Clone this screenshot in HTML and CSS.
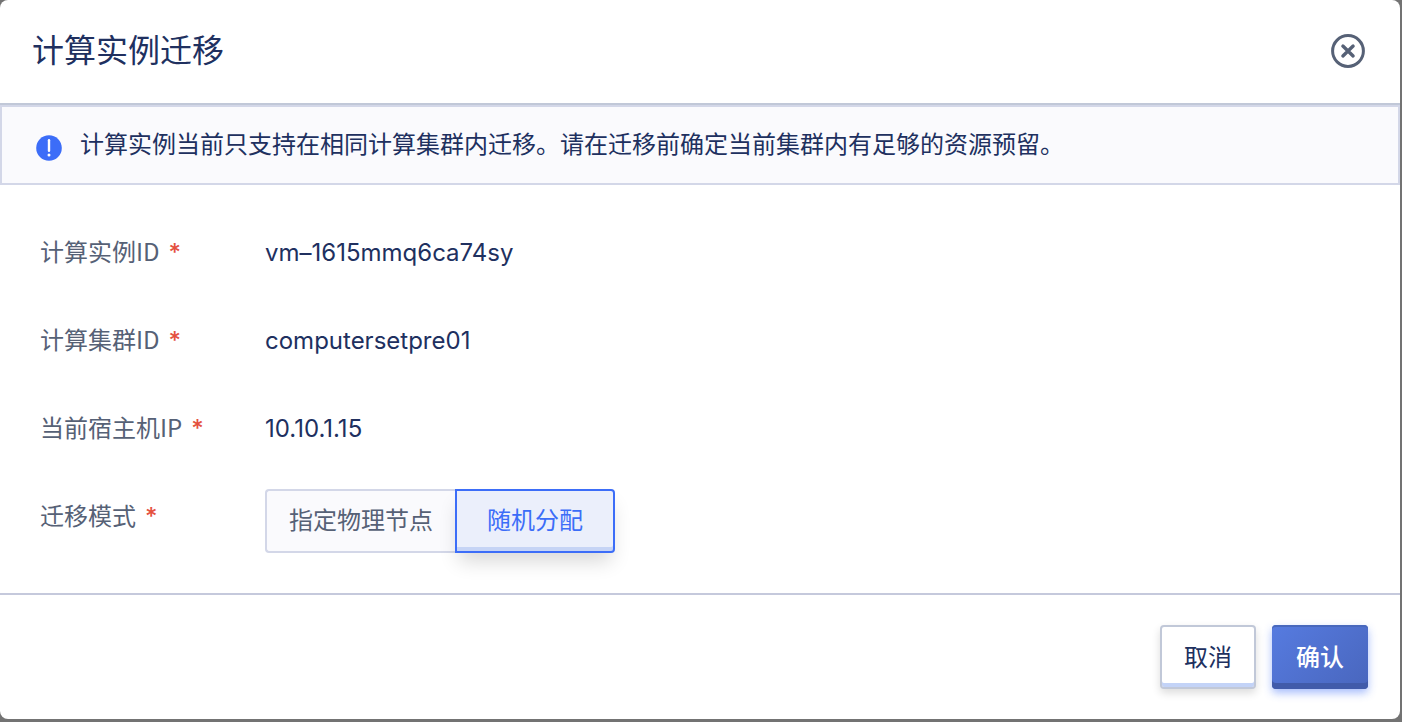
FILE: index.html
```html
<!DOCTYPE html>
<html lang="zh-CN">
<head>
<meta charset="utf-8">
<meta name="viewport" content="width=device-width, initial-scale=1">
<title>计算实例迁移</title>
<link rel="stylesheet" href="styles.css">
</head>
<body class="backdrop">
<form class="modal" role="dialog" aria-labelledby="modal-title">
  <header class="modal-header">
    <h1 class="modal-title" id="modal-title">计算实例迁移</h1>
    <button class="close" type="button" aria-label="关闭">
      <svg class="close-icon" viewBox="0 0 36 36" aria-hidden="true">
        <circle cx="18" cy="18" r="15.4" fill="none" stroke="currentColor" stroke-width="3"/>
        <path d="M12.9 13.1l10.2 9.8M23.1 13.1l-10.2 9.8" fill="none" stroke="currentColor" stroke-width="3.4" stroke-linecap="round"/>
      </svg>
    </button>
  </header>
  <div class="alert" role="note">
    <svg class="alert-icon" viewBox="0 0 26 26" aria-hidden="true">
      <circle cx="13" cy="13" r="12.8" fill="#3c6df8"/>
      <path d="M13 5.3v10.4" stroke="#fff" stroke-width="2.4" stroke-linecap="round"/>
      <circle cx="13" cy="20" r="1.5" fill="#fff"/>
    </svg>
    <p class="alert-text">计算实例当前只支持在相同计算集群内迁移。请在迁移前确定当前集群内有足够的资源预留。</p>
  </div>
  <div class="fields">
    <div class="field">
      <label class="label" for="vm">计算实例ID<span class="star">*</span></label>
      <output class="value" id="vm">vm–1615mmq6ca74sy</output>
    </div>
    <div class="field">
      <label class="label" for="cluster">计算集群ID<span class="star">*</span></label>
      <output class="value" id="cluster">computersetpre01</output>
    </div>
    <div class="field">
      <label class="label" for="host">当前宿主机IP<span class="star">*</span></label>
      <output class="value" id="host">10.10.1.15</output>
    </div>
    <div class="field">
      <span class="label" id="mode-label">迁移模式<span class="star">*</span></span>
      <div class="segments" role="radiogroup" aria-labelledby="mode-label">
        <label class="segment"><input class="segment-input" type="radio" name="mode" value="node">指定物理节点</label>
        <label class="segment segment-wide"><input class="segment-input" type="radio" name="mode" value="random" checked>随机分配</label>
      </div>
    </div>
  </div>
  <footer class="modal-footer">
    <button class="btn btn-cancel" type="button">取消</button>
    <button class="btn btn-confirm" type="submit">确认</button>
  </footer>
</form>
</body>
</html>
```
FILE: styles.css
```css
* { box-sizing: border-box; }

.backdrop {
  margin: 0;
  min-height: 100vh;
  padding: 0 2px 3px 0;
  display: flex;
  background: #737373;
  color: #20305f;
  font-family: Inter, "Noto Sans CJK SC", sans-serif;
  font-size: 24px;
}

.modal {
  flex: 1;
  display: flex;
  flex-direction: column;
  background: #fff;
  border-radius: 8px;
}

.modal-header {
  display: flex;
  align-items: center;
  justify-content: space-between;
  padding: 27px 34px 28px 32px;
  border-bottom: 2px solid #c1c8d8;
}

.modal-title {
  margin: 0;
  font-size: 32px;
  line-height: 48px;
  font-weight: 400;
}

.close {
  display: flex;
  padding: 0;
  border: 0;
  background: none;
  color: #566176;
  cursor: pointer;
}

.close-icon { width: 36px; height: 36px; }

.alert {
  display: flex;
  align-items: center;
  gap: 18px;
  padding: 18px 34px;
  border: 2px solid #d3d7e8;
  background: #fafafd;
}

.alert-icon {
  flex: none;
  width: 26px;
  height: 26px;
  margin-top: 5px;
}

.alert-text {
  margin: 0;
  line-height: 40px;
}

.fields {
  display: flex;
  flex-direction: column;
  gap: 24px;
  padding: 40px;
}

.field {
  display: grid;
  grid-template-columns: 225px 1fr;
  align-items: start;
  min-height: 64px;
}

.label {
  color: #566176;
  font-family: "Noto Sans CJK SC", sans-serif;
  line-height: 52px;
}

.star {
  margin-left: 9px;
  color: #e4513f;
  font-family: Inter, sans-serif;
  font-weight: 500;
}

.value { line-height: 56px; }

.segments { display: flex; }

.segment {
  padding: 0 22px;
  border: 2px solid #d3d7e8;
  border-right: 0;
  border-radius: 4px 0 0 4px;
  background: #fafafd;
  color: #566176;
  line-height: 60px;
  cursor: pointer;
}

.segment-wide {
  padding: 0 30px;
  border-right: 2px solid #d3d7e8;
  border-radius: 0 4px 4px 0;
}

.segment:has(:checked) {
  border-color: #3c6df8;
  background: #ebeffb;
  color: #3c6df8;
  box-shadow: inset 0 -4px #c6d4f5, 0 12px 20px -4px rgba(0, 0, 0, 0.16);
}

.segment-input {
  position: absolute;
  appearance: none;
  margin: 0;
}

.modal-footer {
  display: flex;
  flex: 1;
  align-items: flex-start;
  justify-content: flex-end;
  gap: 16px;
  padding: 30px 32px;
  border-top: 2px solid #c5c9dc;
}

.btn {
  height: 64px;
  padding: 0 22px 4px;
  border: 2px solid #c1c8d8;
  border-radius: 4px;
  font: inherit;
  cursor: pointer;
}

.btn-cancel {
  background: #fff;
  color: #20305f;
  box-shadow: inset 0 -4px #c3d3f7, 0 4px 8px rgba(0, 0, 0, 0.14);
}

.btn-confirm {
  padding: 0 24px 4px;
  border: 0;
  background: linear-gradient(135deg, #567be0, #4966bd);
  color: #fff;
  font-weight: 500;
  box-shadow: inset 0 2px #4868bd, inset 0 -6px #415baa, 0 4px 8px rgba(60, 109, 248, 0.45);
}
```
